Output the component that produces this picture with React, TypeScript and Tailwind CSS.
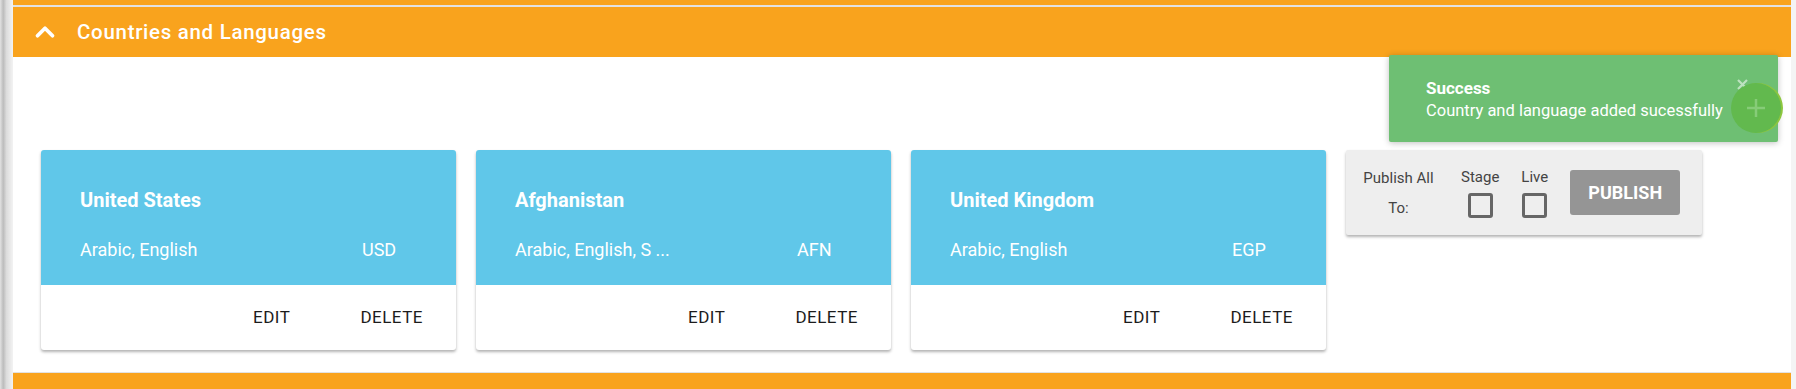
import { ChevronUp } from "lucide-react"

const countries = [
  { name: "United States", languages: "Arabic, English", currency: "USD" },
  { name: "Afghanistan", languages: "Arabic, English, S ...", currency: "AFN" },
  { name: "United Kingdom", languages: "Arabic, English", currency: "EGP" },
]

function CountryCard({ name, languages, currency }: { name: string; languages: string; currency: string }) {
  return (
    <div className="w-[415px] shrink-0 overflow-hidden rounded-[3px] bg-white shadow-[0_2px_3px_rgba(0,0,0,0.3)]">
      <div className="h-[135px] bg-[#60c7e9] pl-[39px] pt-[38px] text-white">
        <div className="text-[20px] font-bold leading-[24px]">{name}</div>
        <div className="mt-[27px] flex text-[18px] leading-[22px]">
          <div className="w-[282px]">{languages}</div>
          <div>{currency}</div>
        </div>
      </div>
      <div className="flex h-[65px] items-center justify-end gap-[70px] pr-[33px] text-[17px] font-normal tracking-[0.5px] text-[#1c1c1c]">
        <button>EDIT</button>
        <button>DELETE</button>
      </div>
    </div>
  )
}

function Checkbox({ label }: { label: string }) {
  return (
    <div className="flex flex-col items-center">
      <span className="text-[15px] leading-[18px] text-[#444]">{label}</span>
      <span className="mt-[7px] h-[25px] w-[25px] rounded-[3px] border-[3px] border-[#666]" />
    </div>
  )
}

function PublishPanel() {
  return (
    <div className="flex h-[85px] w-[356px] shrink-0 items-center rounded-[2px] bg-[#eeeeee] pl-[17px] shadow-[0_2px_3px_rgba(0,0,0,0.3)]">
      <div className="w-[71px] text-center text-[15px] leading-[30px] text-[#444]">
        Publish All
        <br />
        To:
      </div>
      <div className="ml-[27px]">
        <Checkbox label="Stage" />
      </div>
      <div className="ml-[22px]">
        <Checkbox label="Live" />
      </div>
      <button className="ml-[22px] h-[45px] w-[110px] rounded-[3px] bg-[#959595] text-[18px] font-bold text-white">
        PUBLISH
      </button>
    </div>
  )
}

export default function App() {
  return (
    <div className="relative flex h-[389px] w-full overflow-hidden bg-white font-['Roboto',sans-serif]">
      {/* left edge shadow */}
      <div className="w-[13px] shrink-0 bg-[linear-gradient(to_right,#e2e2e2,#bcbcbc_25%,#dcdcdc_50%,#f3f3f3)]" />

      <div className="flex min-w-0 flex-1 flex-col">
        <div className="h-[5px] bg-[#f9a31d]" />
        <div className="h-[2px] bg-[#e2e2e2]" />
        <div className="flex h-[50px] items-center bg-[#f9a31d] text-white">
          <ChevronUp className="ml-[17px] h-[30px] w-[30px]" strokeWidth={3} />
          <span className="ml-[17px] text-[20.5px] font-medium tracking-[0.7px]">Countries and Languages</span>
        </div>
        <div className="flex h-[315px] items-start gap-5 pl-[28px] pt-[93px]">
          {countries.map((c) => (
            <CountryCard key={c.name} {...c} />
          ))}
          <PublishPanel />
        </div>
        <div className="h-[1px] bg-[#e2e2e2]" />
        <div className="flex-1 bg-[#f9a31d]" />
      </div>

      <div className="w-[5px] shrink-0 bg-[#f4f4f4]" />

      {/* toast */}
      <div className="absolute right-[18px] top-[55px] h-[87px] w-[389px] rounded-[2px] bg-[#6ebf73] pl-[37px] pt-[21px] text-white shadow-[0_1px_6px_rgba(0,0,0,0.25)]">
        <div className="text-[17px] font-bold leading-[24px]">Success</div>
        <div className="text-[16.5px] leading-[22px]">Country and language added sucessfully</div>
        <svg
          className="absolute right-[30px] top-[24px]"
          width="11"
          height="11"
          viewBox="0 0 11 11"
          stroke="rgba(255,255,255,0.55)"
          strokeWidth="2.2"
        >
          <path d="M1 1l9 9M10 1l-9 9" />
        </svg>
      </div>
      <div className="absolute right-[15px] top-[83px] flex h-[50px] w-[50px] items-center justify-center rounded-full bg-[#62b94e] shadow-[2px_0_0_#8dc63f]">
        <svg width="22" height="22" viewBox="0 0 22 22" stroke="#86cc78" strokeWidth="2.5">
          <path d="M11 2v18M2 11h18" />
        </svg>
      </div>
    </div>
  )
}
